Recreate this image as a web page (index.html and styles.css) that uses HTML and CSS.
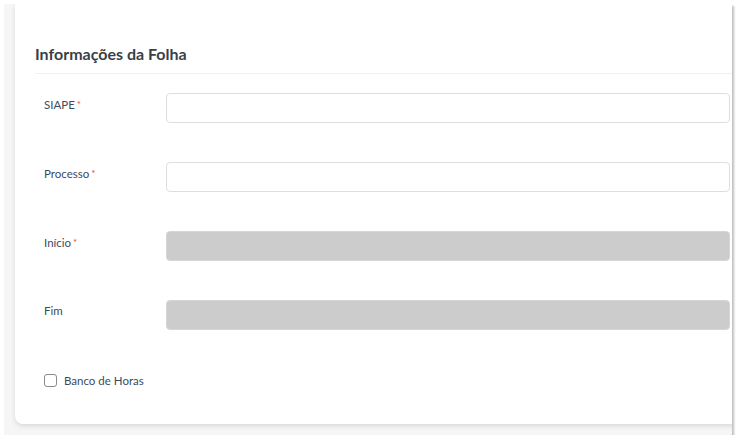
FILE: index.html
```html
<!DOCTYPE html>
<html lang="pt-BR">
<head>
    <meta charset="UTF-8">
    <title>Informações da Folha</title>
    <link rel="stylesheet" href="styles.css">
</head>
<body>
    <div class="frame">
        <div class="card">
            <h2 class="card-title">Informações da Folha</h2>
            <form class="form">
                <div class="row">
                    <label for="siape">SIAPE<span class="req">*</span></label>
                    <input type="text" id="siape">
                </div>
                <div class="row">
                    <label for="processo">Processo<span class="req">*</span></label>
                    <input type="text" id="processo">
                </div>
                <div class="row">
                    <label for="inicio">Início<span class="req">*</span></label>
                    <input type="text" id="inicio" disabled>
                </div>
                <div class="row">
                    <label for="fim">Fim</label>
                    <input type="text" id="fim" disabled>
                </div>
                <div class="check">
                    <input type="checkbox" id="banco">
                    <label for="banco">Banco de Horas</label>
                </div>
            </form>
        </div>
    </div>
</body>
</html>
```

FILE: styles.css
```css
body {
    margin: 0;
    background-color: #ffffff;
    font-family: Lato, "Open Sans", sans-serif;
}
.frame {
    margin: 4px 0 0 4px;
    width: 728px;
    height: 431px;
    background-color: #f6f6f6;
    box-shadow: 2px 2px 2px rgba(0, 0, 0, 0.25);
    overflow: hidden;
}
.card {
    margin-left: 11px;
    width: 737px;
    height: 420px;
    box-sizing: border-box;
    background-color: #ffffff;
    border-radius: 0 0 8px 8px;
    box-shadow: 0 2px 5px rgba(0, 0, 0, 0.12);
    padding: 40px 0 0 20px;
}
.card-title {
    margin: 0;
    font-size: 16px;
    line-height: 20px;
    font-weight: 700;
    color: #3a3f47;
    padding-bottom: 9px;
    border-bottom: 1px solid #f1f1f1;
}
.form {
    padding: 19px 0 0 9px;
}
.row {
    display: flex;
    align-items: flex-start;
    margin-bottom: 39px;
}
.row label {
    width: 122px;
    flex-shrink: 0;
    font-size: 11.5px;
    line-height: 16px;
    padding-top: 3px;
    color: #3b4b5e;
}
.req {
    color: #e74c3c;
    font-size: 10px;
    margin-left: 2px;
    vertical-align: 1px;
}
.row input {
    width: 564px;
    height: 30px;
    box-sizing: border-box;
    border: 1px solid #dedede;
    border-radius: 4px;
    background-color: #ffffff;
    margin: 0;
}
.row input:disabled {
    background-color: #cccccc;
    border-color: #d6d6d6;
}
.check {
    display: flex;
    align-items: center;
    margin-top: 44px;
}
.check input {
    appearance: none;
    width: 13px;
    height: 13px;
    margin: 0 7px 0 0;
    border: 1px solid #8a8a8a;
    border-radius: 3px;
    background-color: #ffffff;
}
.check label {
    font-size: 11.5px;
    color: #3b4b5e;
}
```
